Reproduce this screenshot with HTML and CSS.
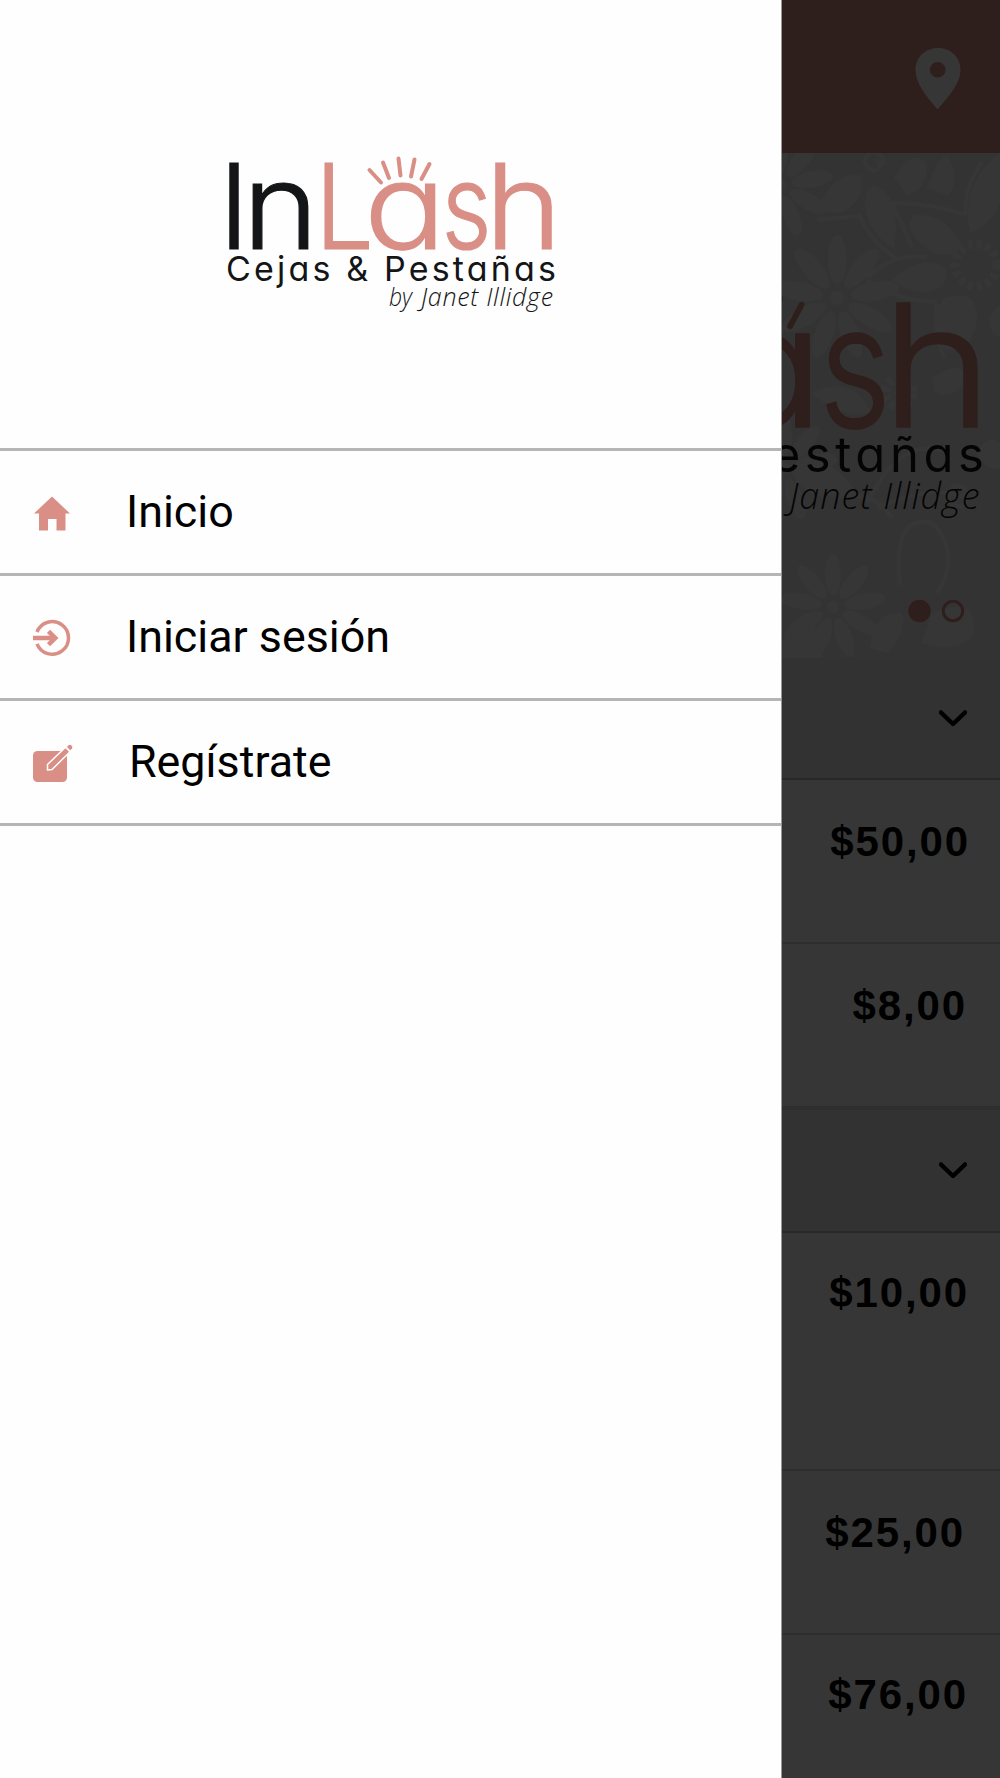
FILE: index.html
```html
<!DOCTYPE html>
<html lang="es">
<head>
<meta charset="utf-8">
<title>InLash</title>
<link rel="stylesheet" href="styles.css">
</head>
<body>
<div class="screen">
  <aside class="drawer">
    <div class="brand">
      <svg class="brand-logo" viewBox="0 0 330 160">
        <g id="logo">
          <g class="logo-name">
            <text class="ink" x="-7.500" y="95">I</text>
            <text class="ink" x="16.500" y="95" textLength="76" lengthAdjust="spacingAndGlyphs">n</text>
            <text class="rose" x="89" y="95" textLength="59" lengthAdjust="spacingAndGlyphs">L</text>
            <text class="rose" x="138" y="95" textLength="82" lengthAdjust="spacingAndGlyphs">a</text>
            <text class="rose" x="215.500" y="95" textLength="50" lengthAdjust="spacingAndGlyphs">s</text>
            <text class="rose" x="259" y="95" textLength="77" lengthAdjust="spacingAndGlyphs">h</text>
          </g>
          <path class="lashes" d="M143.500 16L155 28.500M157 8.500L163 24M172.500 4.500L174.500 21.500M188.500 5.500L185 22.500M203.500 10L195.500 25"/>
          <text class="logo-tag ink" x="0" y="126.500" textLength="330">Cejas &amp; Pestañas</text>
          <text class="logo-by ink" y="152"><tspan x="163" textLength="23" lengthAdjust="spacingAndGlyphs">by</tspan> <tspan x="195" textLength="132">Janet Illidge</tspan></text>
        </g>
      </svg>
    </div>
    <nav class="menu">
      <a class="item">
        <svg class="icon" viewBox="0 0 44 40"><path class="fill" d="M22 3.500L40 20.500H35.500V37.500H26.500V26H18V37.500H9V20.500H4Z"/></svg>
        <span>Inicio</span>
      </a>
      <a class="item">
        <svg class="icon" viewBox="0 0 44 40"><path class="line" d="M7 14A16.300 16.300 0 1 1 7 25.800"/><path class="arrow" d="M3 20H25M18.500 13.300L25.300 20L18.500 26.700"/></svg>
        <span>Iniciar sesión</span>
      </a>
      <a class="item item-register">
        <svg class="icon" viewBox="0 0 44 40"><rect class="fill" x="3" y="8" width="34" height="31" rx="4.500"/><path class="pencil" d="M17.500 27V21.500L35.500 4.300L40 8.800L22 26.500Z"/><path class="fill" d="M37 4L38.800 2.100Q40 1 41.500 2.500T42 5.600L40.200 7.300Z"/></svg>
        <span>Regístrate</span>
      </a>
    </nav>
  </aside>

  <main class="page">
    <header class="topbar">
      <svg class="pin" viewBox="0 0 46 62"><path fill-rule="evenodd" d="M23 0C10 0 .5 9.500 .5 22C.5 36 12 49 22.500 61.500C33 49 45.500 36 45.500 22C45.500 9.500 36 0 23 0ZM22.700 14A7.800 7.800 0 1 1 22.700 29.600A7.800 7.800 0 1 1 22.700 14Z"/></svg>
    </header>
    <section class="banner">
      <svg class="art" viewBox="0 0 218 505">
        <defs>
          <symbol id="flower" viewBox="-60 -60 120 120">
            <ellipse cx="0" cy="-33" rx="8" ry="21"/>
            <ellipse cx="0" cy="-33" rx="8" ry="21" transform="rotate(40)"/>
            <ellipse cx="0" cy="-33" rx="8" ry="21" transform="rotate(80)"/>
            <ellipse cx="0" cy="-33" rx="8" ry="21" transform="rotate(120)"/>
            <ellipse cx="0" cy="-33" rx="8" ry="21" transform="rotate(160)"/>
            <ellipse cx="0" cy="-33" rx="8" ry="21" transform="rotate(200)"/>
            <ellipse cx="0" cy="-33" rx="8" ry="21" transform="rotate(240)"/>
            <ellipse cx="0" cy="-33" rx="8" ry="21" transform="rotate(280)"/>
            <ellipse cx="0" cy="-33" rx="8" ry="21" transform="rotate(320)"/>
            <circle r="6"/>
          </symbol>
        </defs>
        <g class="floral">
          <use href="#flower" x="-15" y="75" width="140" height="140"/>
          <use href="#flower" x="-62" y="-28" width="120" height="120"/>
          <use href="#flower" x="-8" y="395" width="118" height="118"/>
          <use href="#flower" x="-58" y="255" width="120" height="120"/>
          <path d="M132 62Q165 60 180 94Q160 112 136 88Q122 74 132 62ZM110 127Q140 100 164 115Q168 132 150 138Q130 142 110 127ZM162 145Q195 135 195 165Q190 205 160 195Q145 165 162 145ZM218 0Q178 30 188 80Q210 70 218 50ZM92 32Q120 42 112 96Q75 70 85 38ZM35 58Q48 20 78 22Q85 45 60 60ZM145 35Q155 5 165 2Q180 25 166 42ZM112 25Q130 -5 145 10Q145 38 125 42ZM220 150Q195 170 218 185ZM150 225Q180 205 185 225Q170 250 152 238ZM30 240Q70 220 90 260Q55 265 30 240ZM10 320Q40 290 75 340Q40 350 10 320ZM150 460Q200 440 190 485Q170 500 140 490ZM88 495Q95 455 120 460Q125 480 105 500ZM0 500Q0 468 22 465Q45 480 40 505H0ZM195 300Q205 280 218 290V315Q205 320 195 300Z"/>
          <path class="vine" d="M35 67L78 63Q88 88 115 106M110 50Q150 50 184 62M110 50L130 94M85 125Q110 100 145 104M85 128Q120 150 155 148M155 150Q150 175 162 205M85 350Q120 280 165 300M95 355Q150 330 184 345M118 432Q110 360 150 370Q180 400 155 440M200 8Q180 40 184 62M55 345Q90 335 110 365"/>
          <path class="vine" d="M100 12A9 9 0 1 0 90 17A5 5 0 1 0 94 7M186 342A10 10 0 1 0 177 353A6 6 0 1 0 180 341"/>
          <circle class="rosette" cx="194" cy="112" r="21"/>
          <circle class="rosette" cx="117" cy="240" r="14"/>
        </g>
        <use href="#logo" transform="translate(-273.400 137.200) scale(1.440)"/>
        <circle class="dot" cx="137.500" cy="458" r="11.200"/>
        <circle class="ring" cx="171" cy="458" r="9.700"/>
      </svg>
    </section>
    <section class="group">
      <div class="group-head"><svg class="chevron" viewBox="0 0 28 17"><path d="M2 2.500L14 14L26 2.500"/></svg></div>
      <div class="row">$50,00</div>
      <div class="row row-nudge">$8,00</div>
    </section>
    <section class="group group-second">
      <div class="group-head"><svg class="chevron" viewBox="0 0 28 17"><path d="M2 2.500L14 14L26 2.500"/></svg></div>
      <div class="row row-tall">$10,00</div>
      <div class="row row-inset">$25,00</div>
      <div class="row row-last">$76,00</div>
    </section>
    <div class="scrim"></div>
  </main>
</div>
</body>
</html>
```
FILE: styles.css
```css
* { box-sizing: border-box; }
body { margin: 0; background: #fff; }
.screen { display: flex; width: 1000px; height: 1778px; overflow: hidden; }

.drawer { width: 782px; background: #fefefe; border-right: 1px solid #999; }
.brand { height: 448px; padding: 154px 0 0 226px; }
.brand-logo { display: block; width: 330px; height: 160px; overflow: visible; }
.logo-name { font: 300 118.500px/1 Inter, sans-serif; font-feature-settings: "cv11"; stroke-width: 1.200; }
.logo-name .ink { stroke: #141516; }
.logo-name .rose { stroke: #d98f85; }
.logo-tag { font: 400 34px Inter, sans-serif; font-feature-settings: "cv11"; }
.logo-by { font: italic 300 25px "Open Sans", sans-serif; }
.ink { fill: #141516; }
.rose { fill: #d98f85; }
.lashes { fill: none; stroke: #d98f85; stroke-width: 4; stroke-linecap: round; }

.menu { border-top: 3px solid #b5b5b5; font: 400 44.800px Roboto, sans-serif; color: #000; }
.item { display: flex; align-items: center; height: 125px; padding: 0 0 1px 30px; gap: 52px; border-bottom: 3px solid #b5b5b5; }
.item-register { gap: 55px; }
.icon { width: 44px; height: 40px; margin-top: 2px; }
.fill { fill: #d98f85; }
.line { fill: none; stroke: #d98f85; stroke-width: 3.500; }
.arrow { fill: none; stroke: #d98f85; stroke-width: 4.500; }
.pencil { fill: #d98f85; stroke: #fefefe; stroke-width: 1.500; }

.page { position: relative; flex: 1; overflow: hidden; background: #fff; }
.scrim { position: absolute; inset: 0; background: rgba(0, 0, 0, .79); }
.topbar { height: 153px; padding: 47.500px 0 0 133px; background: #d98f85; }
.pin { display: block; width: 46px; height: 62px; fill: #fff; }
.banner { height: 505px; background: #f1f1f1; }
.art { display: block; width: 218px; height: 505px; }
.floral { fill: #fdfdfd; }
.vine { fill: none; stroke: #fdfdfd; stroke-width: 4; }
.rosette { fill: none; stroke: #fdfdfd; stroke-width: 9; stroke-dasharray: 5 4; }
.dot { fill: #d98f85; }
.ring { fill: none; stroke: #d98f85; stroke-width: 3; }
.group-head { height: 122px; padding: 52px 0 0 157px; background: #ededed; border-bottom: 2px solid #bbb; }
.group-second .group-head { height: 125px; padding-top: 52px; border-top: 2px solid #ddd; }
.chevron { display: block; width: 28px; height: 17px; fill: none; stroke: #000; stroke-width: 4.500; stroke-linecap: round; stroke-linejoin: round; }
.row { height: 164px; padding: 38px 30px 0 0; border-bottom: 2px solid #d8d8d8; font: 700 42px/48px "Liberation Sans", sans-serif; letter-spacing: 1.900px; text-align: right; color: #000; }
.row-nudge { padding-right: 33px; }
.row-tall { height: 238px; padding: 36px 31px 0 0; }
.row-inset { padding-right: 35px; }
.row-last { padding: 36px 32px 0 0; border-bottom: 0; }
```
